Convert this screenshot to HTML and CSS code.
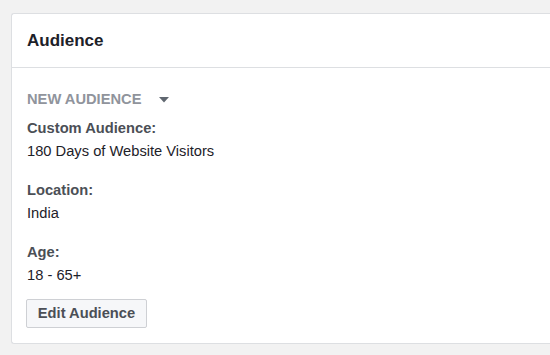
FILE: index.html
```html
<!DOCTYPE html>
<html>
<head>
<meta charset="utf-8">
<link rel="stylesheet" href="styles.css">
</head>
<body>
<div class="card">
  <div class="card-header">Audience</div>
  <div class="card-body">
    <div class="selector">
      <span class="selector-label">NEW AUDIENCE</span>
      <svg class="caret" width="10" height="6" viewBox="0 0 10 6"><path d="M0 0 H10 L5 5.5 Z" fill="#606770"/></svg>
    </div>
    <div class="group">
      <div class="label">Custom Audience:</div>
      <div class="value">180 Days of Website Visitors</div>
    </div>
    <div class="group">
      <div class="label">Location:</div>
      <div class="value">India</div>
    </div>
    <div class="group">
      <div class="label">Age:</div>
      <div class="value">18 - 65+</div>
    </div>
    <button class="btn">Edit Audience</button>
  </div>
</div>
</body>
</html>
```

FILE: styles.css
```css
html, body {
  margin: 0;
  padding: 0;
  background: #f2f2f2;
  font-family: "Liberation Sans", Arial, Helvetica, sans-serif;
  overflow: hidden;
}
body {
  padding: 13px 0 0 11px;
}
.card {
  background: #fff;
  border: 1px solid #dddfe2;
  border-right: none;
  border-radius: 3px 0 0 3px;
  width: 560px;
}
.card-header {
  font-size: 17px;
  font-weight: bold;
  color: #1d2129;
  line-height: 20px;
  padding: 17px 15px 16px;
  border-bottom: 1px solid #dddfe2;
}
.card-body {
  padding: 22px 15px 15px;
  display: flex;
  flex-direction: column;
  align-items: flex-start;
}
.selector {
  display: flex;
  align-items: center;
  gap: 17px;
  line-height: 18px;
  margin-bottom: 11px;
}
.selector-label {
  font-size: 14.7px;
  font-weight: bold;
  color: #90949c;
}
.caret {
  display: block;
  margin-top: 1px;
}
.group {
  display: flex;
  flex-direction: column;
  gap: 5px;
  margin-bottom: 21px;
}
.group:last-of-type {
  margin-bottom: 15px;
}
.label {
  font-size: 14.7px;
  font-weight: bold;
  color: #4b4f56;
  line-height: 18px;
}
.value {
  font-size: 14.7px;
  color: #1d2129;
  line-height: 18px;
}
.btn {
  font-family: "Liberation Sans", Arial, Helvetica, sans-serif;
  font-size: 14.7px;
  font-weight: bold;
  color: #4b4f56;
  background: #f6f7f9;
  border: 1px solid #ced0d4;
  border-radius: 2px;
  height: 29px;
  width: 121px;
  padding: 0;
  margin-left: -1px;
  line-height: 27px;
}
```
